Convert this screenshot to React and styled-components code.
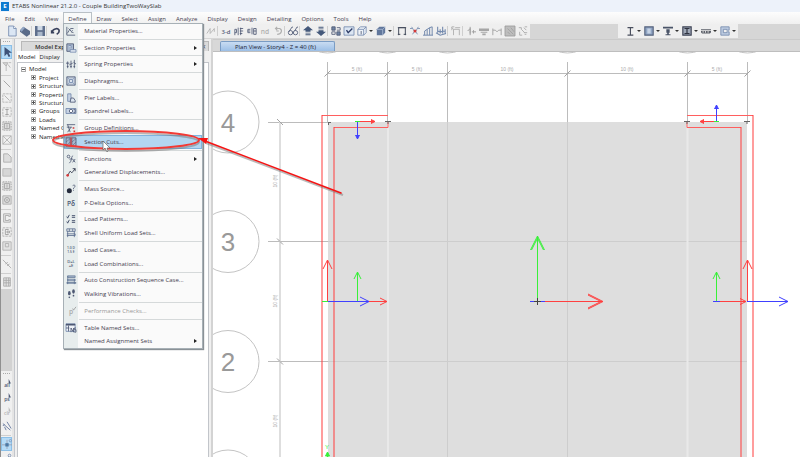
import React from 'react';
import styled, { createGlobalStyle } from 'styled-components';

const GlobalStyle = createGlobalStyle`
    * {
        box-sizing: border-box;
    }
    body {
        margin: 0;
        overflow: hidden;
        font-family: "Open Sans", "Noto Sans", sans-serif;
        font-size: 6px;
        line-height: 8px;
        color: #45404f;
    }
    button {
        margin: 0;
        padding: 0;
        border: 0;
        background: none;
        font: inherit;
        color: inherit;
    }
    ul {
        margin: 0;
        padding: 0;
        list-style: none;
    }
`;

const N = '#4d5873';
const G = '#b0b0b0';
const B = '#7389ad';
const R = '#d33a3a';

// every icon is drawn on a 12 x 12 grid
const icons = {
    /* main toolbar */
    newFile: <><path d="M2 0h6l3 3v9H2z" fill="#dbe6f4" stroke={B} /><path d="M8 0v3h3" fill="#fff" stroke={B} /></>,
    slab: <><path d="M0 5l4-4 8 5v4l-4 3-8-6z" fill="#5b6c8a" /><path d="M0 5l4-4 2 1-4 5z" fill="#94a7c6" /></>,
    save: <><path d="M0 0h12v12H0z" fill="#5f6f8d" /><path d="M3 0h6v5H3z" fill="#cfd9e6" /><path d="M3 7h6v5H3z" fill="#aab8cb" /></>,
    undo: <path d="M2 9V5M1 8h4M2 8c2-6 9-6 9-2 0 2-1 3-3 4" fill="none" stroke="#39415c" strokeWidth="2" />,
    wave: <path d="M1 9l4-6v6l5-6M10 3v4" fill="none" stroke={G} />,
    elev: <path d="M1 4v7M1 4h2v4H1M5 2v9M8 2v9M7 3h4M7 6h4M7 9h3" fill="none" stroke={N} />,
    elevB: <path d="M4 4H1v4h3M1 6h3M6 2v8M8 3h3v7H8zM8 6h3" fill="none" stroke={N} />,
    rotate: <path d="M3 3h5c4 2 2 7-3 7M5 1L3 3l2 2M7 6H4" fill="none" stroke={G} strokeWidth="1.4" />,
    glasses: <><circle cx="3" cy="8" r="2.6" fill="none" stroke={N} /><circle cx="9" cy="8" r="2.6" fill="none" stroke={N} /><path d="M1 7l4-6 1 1M8 6l3-5 1 1M5 8h2" fill="none" stroke={N} /></>,
    up: <path d="M6 0l6 5H9v2H3V5H0zM3 8h6v1H3zM3 10h6v1H3z" fill="#44587a" />,
    down: <path d="M6 12L0 7h3V5h6v2h3zM3 3h6v1H3zM3 1h6v1H3z" fill="#44587a" />,
    shapes: <><path d="M1 1h4v4H1zM7 7h4v4H7z" fill="#6f83a4" stroke={N} /><path d="M7 2h4v3H7M1 7h4v3H1z" fill="none" stroke={N} /></>,
    check: <><path d="M0 1h12v10H0z" fill="#dce6f3" stroke={B} /><path d="M3 5l2 3 5-5" fill="none" stroke="#2e3c66" strokeWidth="1.6" /></>,
    cube: <><path d="M1 4l3-3h7v7l-3 3H1zM1 4h7v7M8 4l3-3" fill="#edf2f8" stroke={B} /><path d="M5 6v4" stroke={N} /></>,
    cubeFull: <><path d="M1 4l3-3h7v7l-3 3H1z" fill="#61779c" /><path d="M1 4h7v7M8 4l3-3" fill="none" stroke="#a9bad4" /></>,
    frame: <path d="M2 11V2h8v9M1 10h3M8 10h3M1 2h10" fill="none" stroke="#454c5d" strokeWidth="1.2" />,
    deform: <><path d="M2 1l3 5M10 1L7 6M3 10l2-3M9 10L7 7M0 3h3M9 3h3" stroke={B} fill="none" /><circle cx="6" cy="6" r="1.8" fill={R} /></>,
    bars: <path d="M0 11h12M2 11V6M5 11V4M8 11V2M11 11V1M2 6l3-2 3-2 3-1" fill="none" stroke={B} strokeWidth="1.2" />,
    barsB: <path d="M0 8l5 3 7-2M2 8V1M5 9V4M8 9V1M11 9V4M2 6l3 1 6-1" fill="none" stroke={B} strokeWidth="1.3" />,
    frameG: <path d="M3 11V4h7v7M1 2l2 2M1 5V1h3M5 2h6" fill="none" stroke="#a9a9a9" />,
    nodeG: <path d="M5 1v10M2 6l3-3v6M7 7h5M9 5v4" fill="none" stroke="#a2a2a2" strokeWidth="1.2" />,
    stackG: <path d="M0 3h12v3H0zM2 7h8v1H2zM4 9h4v2H4z" fill="#a6a6a6" />,
    portalG: <path d="M1 11V3M11 11V3M1 5h3l2 2 2-2h3" fill="none" stroke="#a8a8a8" strokeWidth="1.2" />,
    hatchG: <><path d="M0 0h12v12H0z" fill="#bdbdbd" stroke="#9a9a9a" /><path d="M3 3l7 7M3 7l3 3M7 2l4 5" stroke="#a0a0a0" /></>,
    dotsG: <path d="M1 2h3v2M7 2l3 3M8 1h3M2 7v4h3M7 8h4M8 10h2M4 4l4 4" fill="none" stroke="#a6a6a6" />,
    ibeam: <path d="M3 2h7M3 11h7M6.5 2v9" stroke="#4a4f5e" strokeWidth="1.4" />,
    rect: <><path d="M1 1h10v10H1z" fill="#8fa4c3" stroke="#56637e" strokeWidth="1.4" /><path d="M4 3h4v6H4z" fill="#c5d2e4" /></>,
    tee: <path d="M0 1h12v2H0zM4 4h4v4H4zM3 10h6v1H3zM5 7h2v4H5z" fill="#4a5468" />,
    encased: <><path d="M1 1h10v10H1z" fill="#9fa8b7" stroke="#3e4456" strokeWidth="1.4" /><path d="M3 3h6M3 9h6M6 3v6" stroke="#2f3340" strokeWidth="1.4" /></>,
    deck: <path d="M0 4h12v1H0zM0 6h2v2H0zM3 6h2v2H3zM6 6h2v2H6zM9 6h3v2H9zM1 8h10v1H1z" fill="#5c6069" />,
    wall: <path d="M11 1v4H8V4H4v4h4V7h3v4H1V1z" fill="#bccbe0" stroke={B} />,
    /* side toolbar */
    pointer: <path d="M3 0v11l3-3 2 4 2-1-2-4h4z" fill="#3d5279" />,
    pointerG: <path d="M1 2h6l-2 4zM5 5v7M7 4l3 4M8 2h3" fill="#d5d5d5" stroke={G} />,
    line: <path d="M2 2l8 8" stroke="#a7a7a7" strokeWidth="1.2" />,
    lineBox: <><path d="M1 1h10v10H1z" fill="none" stroke={G} strokeDasharray="3 1" /><path d="M3 3l6 6" stroke="#a7a7a7" /></>,
    colBox: <><path d="M1 1h10v10H1z" fill="none" stroke={G} strokeDasharray="3 1" /><path d="M4 3h4M4 9h4M6 3v6" stroke="#999" /></>,
    gridBox: <><path d="M1 1h10v10H1z" fill="#dedede" stroke="#9c9c9c" strokeDasharray="2 1" /><path d="M3 3h6v6H3zM6 4v4" fill="none" stroke="#a4a4a4" /></>,
    cross: <path d="M1 1h10v10H1zM1 1l10 10M11 1L1 11" fill="none" stroke={G} />,
    poly: <path d="M2 1h5l4 4v6H2z" fill="#ddd" stroke="#aaa" />,
    box: <path d="M1 2h10v9H1z" fill="#d6d6d6" stroke="#b3b3b3" />,
    ring: <><path d="M1 1h10v10H1z" fill="#ddd" stroke="#aaa" /><circle cx="6" cy="6" r="3" fill="none" stroke="#999" /><circle cx="6" cy="6" r="1" fill="#999" /></>,
    cshape: <path d="M10 1v3H8V3H4v6h4V8h2v3H2V1z" fill="#ececec" stroke="#a3a3a3" />,
    cbox: <><path d="M1 1h10v10H1z" fill="none" stroke="#aaa" strokeDasharray="3 1" /><path d="M8 3H4v6h4M6 5h3v2H6z" fill="none" stroke="#999" /></>,
    door: <path d="M1 1h10v10H1zM4 3h4v4H4z" fill="#e3e3e3" stroke="#adadad" />,
    link: <path d="M1 1l10 10M4 6l3-2M6 8l3-2" stroke="#a7a7a7" />,
    tableG: <path d="M2 1h8v10H2zM2 4h8M2 7h8M5 1v10M8 1v10" fill="#e2e2e2" stroke="#a8a8a8" />,
    wand: <path d="M1 3l9 8M3 7l2 4M6 1l5 8M1 6l2-2" stroke="#5b7098" fill="none" />,
    snap: <><path d="M0 7h12M6 1v11" stroke="#9a9fb0" /><path d="M4 5h4v4H4z" fill="#4b79a5" /><circle cx="10" cy="2" r="1.4" fill="none" stroke="#8199bb" /></>,
    snapEnd: <><path d="M1 11l7-7" stroke={B} /><circle cx="9" cy="3" r="1.6" fill="none" stroke={B} /></>,
    /* define menu */
    material: <path d="M1 1v10h10M1 9c2-1 3-6 5-6h3M3 3l3 3M8 5l-2 2 3 1" fill="none" stroke={N} />,
    section: <><path d="M1 1h8v9H1z" fill="#a9b9cf" stroke={N} /><path d="M3 3h3v3M5 8h7v3H5z" fill="#e0e8f2" stroke={B} /></>,
    spring: <path d="M2 3v8M6 2v9M10 1v10M0 5h4M4 7l4-2M9 4l3 2M1 9h2M5 9h2M9 9h2" fill="none" stroke={N} />,
    diaphragm: <><path d="M1 1h10v10H1z" fill="#c4cfde" stroke={N} /><path d="M1 1l10 10M11 1L1 11" stroke={B} strokeWidth=".7" /><circle cx="6" cy="6" r="2" fill="#dde5ee" stroke={B} /></>,
    pier: <><path d="M2 1h4v9H2z" fill="#c6d2e3" stroke={B} /><path d="M5 11l1-5h3l2 3v2z" fill="#dce5ef" stroke={N} /></>,
    spandrel: <><path d="M0 3h12v6H0z" fill="#c6d2e3" stroke={B} /><circle cx="6" cy="6" r="2" fill="#fff" stroke={N} /><path d="M9 4h2v4H9" fill="none" stroke={N} /></>,
    group: <><path d="M1 2h10M1 5h6M2 2l3 9M6 5L2 11" fill="none" stroke={N} /><path d="M8 5h2v2H8zM9 9h2v2H9z" fill={R} /></>,
    cuts: <><path d="M0 1h5v10H0zM7 1h5v10H7z" fill="#a9b9d0" stroke={N} /><path d="M0 6l5-4M0 11l5-5M7 6l5-4M7 11l5-5" stroke={N} strokeWidth=".6" /><path d="M6 0v12" stroke={R} strokeWidth="1.4" /></>,
    functions: <><circle cx="3" cy="3" r="1.6" fill="none" stroke={N} /><path d="M8 2C6 4 7 9 4 11M4 6h4M8 6l3 4M11 6l-3 4" fill="none" stroke={N} /></>,
    displacement: <><path d="M2 10l3-5 2 2 4-5M8 2h3v3" fill="none" stroke="#30364a" /><circle cx="2" cy="10" r="1.6" fill={R} /></>,
    mass: <><circle cx="4" cy="8" r="3" fill="#252c3d" /><path d="M8 2c3-2 4 1 1 3v1M9 7v1" fill="none" stroke={N} /></>,
    patterns: <path d="M1 3l1 2 2-4M7 2h4M7 4h4M1 9l1 2 2-4M7 8h4M7 10h4" fill="none" stroke={N} strokeWidth="1.2" />,
    shell: <path d="M1 1h10v3H1zM4 1v3M8 1v3M2 4v7M10 4v7M1 7h10v2H1" fill="none" stroke="#5b6f90" />,
    auto: <path d="M2 1h9v2H2zM2 5h9v2H2zM1 9h11v1H1zM2 1v10M10 5v6" fill="#a5b5cc" stroke="#5b6f90" strokeWidth=".8" />,
    walking: <><ellipse cx="4" cy="5" rx="1.6" ry="2.6" fill={N} /><ellipse cx="4" cy="10" rx="1" ry="1" fill={N} /><ellipse cx="9" cy="3" rx="1.6" ry="2.6" fill={N} /><ellipse cx="9" cy="8" rx="1" ry="1" fill={N} /></>,
    table: <><path d="M0 1h11v9H0z" fill="#eef2f7" stroke={B} /><path d="M0 1h11v2H0z" fill={N} /><path d="M3 3v7M0 6h4M6 11V6l3 5V6M12 6h-2v2h2v3h-2" fill="none" stroke={N} /></>,
};

// small icons that are lettering rather than drawing
const Letters = ({ lines, color = N, size = 5 }) => lines.map((t, i) => (
    <text key={t} x="6" y={lines.length === 1 ? 9 : 5 + i * 5} fontSize={size} fontWeight="600"
        textAnchor="middle" fill={color} fontFamily="Open Sans, sans-serif">{t}</text>
));

const letterIcons = {
    view3d: <Letters lines={['3-d']} size={7} />,
    nd: <Letters lines={['nd']} size={8} color={G} />,
    pdelta: <Letters lines={['Pδ']} size={8} />,
    cases: <Letters lines={['1.0 D', '1.5 E']} size={4} />,
    combos: <Letters lines={['D+L', '+E']} size={5} />,
    perf: <><Letters lines={['p']} size={8} color="#aaa" /><path d="M8 3l1 2 3-4" fill="none" stroke="#999" /></>,
    all: <><Letters lines={['', 'all']} size={6} /><path d="M8 0v6l2-1 1 1z" fill={N} /></>,
    ps: <><Letters lines={['', 'ps']} size={6} /><path d="M8 0v6l2-1 1 1z" fill={N} /></>,
    clr: <><Letters lines={['', 'clr']} size={6} color={G} /><path d="M8 0v6l2-1 1 1z" fill="#bbb" /></>,
};

const Icon = ({ name }) => (
    <IconSvg viewBox="0 0 12 12" aria-hidden="true">{icons[name] || letterIcons[name]}</IconSvg>
);

const mainTools = ['newFile', 'slab', '|', 'save', '|', 'undo'];
const viewTools = [
    'wave', '|', 'view3d', 'elev', 'elevB', 'nd', 'rotate', '|', 'glasses', '|', 'up', 'down', '|',
    'shapes', 'check', 'cube', 'v', 'cubeFull', 'v', '|', 'frame', 'deform', 'bars', 'barsB', '|',
    'frameG', '|', 'nodeG', 'stackG', 'portalG', 'hatchG', 'dotsG',
];
const sectionTools = ['ibeam', 'v', 'rect', 'v', 'tee', 'v', 'encased', 'v', 'deck', 'v', 'wall', 'v'];
const drawTools = [
    'pointer', 'pointerG', '|', 'line', 'lineBox', 'colBox', 'gridBox', 'cross', '|', 'poly', 'box', 'gridBox',
    'ring', '|', 'cshape', 'cbox', 'door', '|', 'link', '|', 'tableG',
];
const selectTools = ['all', 'ps', 'clr', 'wand', '|', 'snap', 'snapEnd'];

const menus = ['File', 'Edit', 'View', 'Define', 'Draw', 'Select', 'Assign', 'Analyze', 'Display', 'Design', 'Detailing', 'Options', 'Tools', 'Help'];

const defineItems = [
    { text: 'Material Properties...', icon: 'material' },
    null,
    { text: 'Section Properties', icon: 'section', sub: true },
    null,
    { text: 'Spring Properties', icon: 'spring', sub: true },
    null,
    { text: 'Diaphragms...', icon: 'diaphragm' },
    null,
    { text: 'Pier Labels...', icon: 'pier' },
    { text: 'Spandrel Labels...', icon: 'spandrel' },
    null,
    { text: 'Group Definitions...', icon: 'group' },
    { text: 'Section Cuts...', icon: 'cuts', active: true },
    null,
    { text: 'Functions', icon: 'functions', sub: true },
    { text: 'Generalized Displacements...', icon: 'displacement' },
    null,
    { text: 'Mass Source...', icon: 'mass' },
    { text: 'P-Delta Options...', icon: 'pdelta' },
    null,
    { text: 'Load Patterns...', icon: 'patterns' },
    { text: 'Shell Uniform Load Sets...', icon: 'shell' },
    null,
    { text: 'Load Cases...', icon: 'cases' },
    { text: 'Load Combinations...', icon: 'combos' },
    null,
    { text: 'Auto Construction Sequence Case...', icon: 'auto' },
    { text: 'Walking Vibrations...', icon: 'walking' },
    null,
    { text: 'Performance Checks...', icon: 'perf', disabled: true },
    null,
    { text: 'Table Named Sets...', icon: 'table' },
    { text: 'Named Assignment Sets', icon: '', sub: true },
];

const treeItems = ['Project', 'Structure', 'Properties', 'Structural', 'Groups', 'Loads', 'Named Output', 'Named Plots'];

const Tools = ({ items, vertical, selected }) => items.map((name, i) => {
    if (name === '|') return <Divider key={i} $vertical={vertical} />;
    if (name === 'v') return <Caret key={i} aria-label="More" />;
    return <ToolButton key={i} aria-label={name} $vertical={vertical} $on={name === selected}><Icon name={name} /></ToolButton>;
});

const DefineMenu = () => (
    <Menu>
        {defineItems.map((item, i) => item === null ? <MenuLine key={i} /> : (
            <MenuRow key={i}>
                <MenuButton $active={item.active} disabled={item.disabled}>
                    <span className='icon'><Icon name={item.icon} /></span>
                    <span className='text'>{item.text}</span>
                    {item.sub && <span className='arrow' />}
                </MenuButton>
            </MenuRow>
        ))}
    </Menu>
);

const Explorer = () => (
    <ExplorerBox>
        <ExplorerHead>
            <h2>Model Explorer</h2>
            <button aria-label="Close">✕</button>
        </ExplorerHead>
        <ExplorerTabs>
            <ExplorerTab $on>Model</ExplorerTab>
            <ExplorerTab>Display</ExplorerTab>
        </ExplorerTabs>
        <TreeBox>
            <Tree>
                <TreeRow><Toggle aria-label="Collapse Model" /><span>Model</span></TreeRow>
                {treeItems.map(t => (
                    <TreeRow key={t} $child><Toggle $plus aria-label={`Expand ${t}`} /><span>{t}</span></TreeRow>
                ))}
            </Tree>
        </TreeBox>
    </ExplorerBox>
);

const Arrow = ({ x, y, to, dir, color, head = 5, solid }) => {
    // dir is the angle of the shaft in degrees, `to` is its length
    return (
        <g transform={`translate(${x} ${y}) rotate(${dir})`} stroke={color} fill={solid ? color : 'none'}>
            <path d={`M0 0H${to}`} />
            <path d={`M${to - head} ${-head / 2}L${to} 0L${to - head} ${head / 2}`} />
        </g>
    );
};

const RED = '#ff4040';
const GREEN = '#38f038';
const BLUE = '#4040ff';

const Plan = () => (
    <PlanSvg role="img" aria-label="Plan View">
        <g transform="translate(-213 -52)" fill="none">
            {/* slab */}
            <rect x="328" y="122" width="419" height="400" fill="#dedede" />
            {/* grid */}
            <g stroke="#cdcdcd">
                <path d="M447.5 122V520M567.5 122V520M328 241.5H747M328 361.5H747" />
            </g>
            <path d="M388 122V520M687.5 122V520" stroke="#e9e9e9" strokeWidth="2" />
            <g stroke="#bcbcbc">
                <path d="M327.5 62V122M387.5 62V122M447.5 62V122M567.5 62V122M687.5 62V122M747.5 62V122" />
                <path d="M327 73.5H748" />
                <path d="M268 122.5H328M268 241.5H328M268 361.5H328" />
            </g>
            <path d="M280 122V520" stroke="#dedede" strokeWidth="2" />
            <g stroke="#a2a2a2">
                {[327.5, 387.5, 447.5, 567.5, 687.5, 747.5].map(x => <path key={x} d={`M${x - 3} 76.5l6-6`} />)}
                {[122, 241.5, 361.5].map(y => <path key={y} d={`M277 ${y - 3}l6 6`} />)}
            </g>
            {/* grid bubbles */}
            <g stroke="#c4c4c4">
                {[122, 241.5, 361.5, 481].map(y => <circle key={y} cx="228" cy={y} r="31" />)}
                {[327.5, 387.5, 447.5, 567.5, 687.5, 747.5].map(x => <circle key={x} cx={x} cy="22" r="31" />)}
            </g>
            <g fill="#999" fontSize="26" textAnchor="middle">
                <text x="228" y="132">4</text>
                <text x="228" y="251">3</text>
                <text x="228" y="371">2</text>
            </g>
            <g fill="#aaa" fontSize="5" textAnchor="middle">
                <text x="357" y="71">5 (ft)</text>
                <text x="417" y="71">5 (ft)</text>
                <text x="507" y="71">10 (ft)</text>
                <text x="627" y="71">10 (ft)</text>
                <text x="717" y="71">5 (ft)</text>
                {[181, 301, 421].map(y => (
                    <text key={y} transform={`translate(277 ${y}) rotate(-90)`}>10 (ft)</text>
                ))}
            </g>
            {/* walls */}
            <g stroke="#ff5f5f">
                <path d="M388 115.5H322M388 122V127.5H334M687 115.5H753M687 122V127.5H741" />
            </g>
            <g stroke="#ff3c3c" strokeWidth="2" opacity=".5">
                <path d="M322 115V520M334 127V520M741 127V520M753 115V520" />
            </g>
            <path d="M328 122.5h3M328.5 122v3M385 121.5h6M388 121v3M684 121.5h6M687 121v3M744 121.5h6M747 121v3" stroke="#666" />
            {/* local axes */}
            <Arrow x={358} y={121.5} to={17} dir={0} color={RED} head={4} solid />
            <Arrow x={357.5} y={122} to={17} dir={90} color={BLUE} head={4} solid />
            <Arrow x={717} y={121.5} to={17} dir={180} color={RED} head={4} solid />
            <Arrow x={716.5} y={121} to={16} dir={270} color={BLUE} head={4} solid />
            <path d="M355 121.5h5M714 121.5h5M322 301.5h6" stroke={GREEN} />
            <Arrow x={328} y={301.5} to={59} dir={0} color={RED} head={7} />
            <Arrow x={328} y={301.5} to={41} dir={0} color={BLUE} head={9} />
            <Arrow x={327.5} y={301} to={41} dir={270} color={RED} head={9} />
            <Arrow x={357.5} y={301} to={29} dir={270} color={GREEN} head={7} />
            <Arrow x={537.5} y={301} to={65} dir={270} color={GREEN} head={14} />
            <Arrow x={537.5} y={301} to={63} dir={270} color={GREEN} head={12} />
            <Arrow x={545} y={301.5} to={58} dir={0} color={RED} head={15} />
            <Arrow x={545} y={301.5} to={56} dir={0} color={RED} head={13} />
            <path d="M530 301.5h15" stroke={BLUE} />
            <path d="M534 301.5h7M537.5 298v7" stroke="#444" />
            <Arrow x={717} y={301.5} to={29} dir={0} color={RED} head={6} />
            <Arrow x={716.5} y={301} to={29} dir={270} color={GREEN} head={7} />
            <Arrow x={747.5} y={301} to={41} dir={270} color={RED} head={9} />
            <Arrow x={747} y={301.5} to={41} dir={0} color={BLUE} head={9} />
            <path d="M713 301.5h7" stroke={BLUE} />
            {/* global Y axis */}
            <text x="327" y="449" fontSize="6" textAnchor="middle" fill={GREEN}>Y</text>
            <path d="M327.5 452l-2 4h4zM327.5 455v9" fill={GREEN} stroke={GREEN} />
        </g>
    </PlanSvg>
);

const App = () => {
    return (
        <Page>
            <GlobalStyle />
            <TitleBar><b>E</b><h1>ETABS Nonlinear 21.2.0 - Couple BuildingTwoWaySlab</h1></TitleBar>
            <MenuBar>
                {menus.map(m => (
                    <MenuCell key={m}>
                        <MenuTitle $open={m === 'Define'}>{m}</MenuTitle>
                        {m === 'Define' && <DefineMenu />}
                    </MenuCell>
                ))}
            </MenuBar>
            <ToolStrip>
                <ToolGroup><Tools items={mainTools} /><Filler /><Tools items={viewTools} /></ToolGroup>
                <ToolGroup $right><Tools items={sectionTools} /></ToolGroup>
            </ToolStrip>
            <Body>
                <SideBar>
                    <SideGroup><Grip /><Tools items={drawTools} vertical selected="pointer" /></SideGroup>
                    <SideGroup $bottom><Grip /><Tools items={selectTools} vertical selected="snap" /></SideGroup>
                </SideBar>
                <Explorer />
                <View>
                    <ViewTabs><ViewTab>Plan View - Story4 - Z = 40 (ft)</ViewTab></ViewTabs>
                    <Plan />
                </View>
            </Body>
            <Markup aria-hidden="true">
                <g fill="none" stroke="#777" opacity=".5" strokeWidth="2">
                    <ellipse cx="126" cy="142" rx="73" ry="9" />
                    <path d="M206 143L343 195" />
                </g>
                <ellipse cx="126" cy="140" rx="73" ry="9" fill="none" stroke="#f23a35" strokeWidth="2" />
                <path d="M205 141L341 193" stroke="#f51414" strokeWidth="1.6" strokeLinecap="round" />
                <path d="M198 138l10 0-2 6z" fill="#f51414" />
                <path d="M103 141v9l2-2 2 4 1-1-1-3h3z" fill="#fff" stroke="#666" strokeWidth=".7" />
            </Markup>
        </Page>
    );
};

const Page = styled.div`
    position: relative;
    display: flex;
    flex-direction: column;
    height: 100vh;
    background: #fff;
`;

const IconSvg = styled.svg`
    display: block;
    width: 10px;
    height: 10px;
    overflow: visible;
`;

const TitleBar = styled.header`
    display: flex;
    align-items: center;
    gap: 3px;
    height: 12px;
    padding-left: 1px;
    background: #edf2fa;
    b {
        width: 8px;
        height: 9px;
        background: #0e7ad0;
        color: #fff;
        text-align: center;
    }
    h1 {
        margin: 0;
        font-size: 6px;
        font-weight: 400;
        color: #333;
    }
`;

const MenuBar = styled.nav`
    display: flex;
    height: 12px;
    background: linear-gradient(#fdfdfd, #f0f0f0);
`;

const MenuCell = styled.div`
    position: relative;
`;

const MenuTitle = styled.button`
    height: 12px;
    padding: 0 4px;
    border: 1px solid ${props => props.$open ? '#b9c0c6' : 'transparent'};
    border-bottom: 0;
    background: ${props => props.$open ? '#f9fafa' : 'none'};
`;

const Menu = styled.ul`
    position: absolute;
    z-index: 2;
    top: 11px;
    left: 0;
    display: flex;
    flex-direction: column;
    width: 140px;
    min-height: 326px;
    border: 1px solid #a7b0b6;
    background: linear-gradient(90deg, #e7eded 14px, #fafafa 14px);
    box-shadow: 1px 1px 1px #8a9196;
`;

const MenuRow = styled.li`
    flex: 1;
    display: flex;
`;

const MenuLine = styled.li`
    height: 1px;
    margin: 1px 0 1px 15px;
    background: #d5d9da;
`;

const MenuButton = styled.button`
    flex: 1;
    display: flex;
    align-items: center;
    padding-right: 5px;
    text-align: left;
    background: ${props => props.$active ? '#b3d6f1' : 'none'};
    box-shadow: ${props => props.$active ? 'inset 0 0 0 1px #7fb5e0' : 'none'};
    &:disabled {
        color: #999;
    }
    .icon {
        width: 20px;
        padding-left: 2px;
    }
    .text {
        flex: 1;
    }
    .arrow {
        border: 2px solid transparent;
        border-left: 3px solid #222;
        border-right: 0;
    }
`;

const ToolStrip = styled.div`
    display: flex;
    height: 15px;
    background: #d6d6d6;
`;

const ToolGroup = styled.div`
    display: flex;
    align-items: center;
    height: 14px;
    padding-left: 5px;
    padding-right: 1px;
    margin-left: ${props => props.$right ? '88px' : '0'};
    background: #efefef;
`;

// room taken by the tools that the open menu covers
const Filler = styled.div`
    width: 143px;
`;

const ToolButton = styled.button`
    flex: none;
    display: flex;
    align-items: center;
    justify-content: center;
    width: ${props => props.$vertical ? '11px' : '13px'};
    height: ${props => props.$vertical ? '14px' : '13px'};
    background: ${props => props.$on ? '#b5dbf7' : 'none'};
    box-shadow: ${props => props.$on ? 'inset 0 0 0 1px #8cc0e8' : 'none'};
`;

const Divider = styled.span`
    flex: none;
    width: ${props => props.$vertical ? '10px' : '1px'};
    height: ${props => props.$vertical ? '1px' : '10px'};
    margin: ${props => props.$vertical ? '2px 0 1px' : '0 1px 0 0'};
    background: #cfcfcf;
`;

const Caret = styled.button`
    width: 4px;
    margin: 0 1px;
    border: 2px solid transparent;
    border-top-color: #333;
    border-bottom: 0;
`;

const Body = styled.main`
    flex: 1;
    display: flex;
    min-height: 0;
`;

const SideBar = styled.aside`
    flex: none;
    display: flex;
    flex-direction: column;
    justify-content: space-between;
    width: 14px;
    overflow: hidden;
    background: #d2d2d2;
    border-left: 1px solid #8f8f8f;
    border-right: 2px solid #e4e4e4;
`;

const SideGroup = styled.div`
    display: flex;
    flex-direction: column;
    background: #f0f0f0;
    margin-bottom: ${props => props.$bottom ? '-8px' : '0'};
`;

const Grip = styled.span`
    height: 2px;
    margin: 2px;
    border-top: 1px dotted #aaa;
`;

const ExplorerBox = styled.section`
    flex: none;
    display: flex;
    flex-direction: column;
    width: 199px;
    padding: 2px 2px 0 2px;
    background: #f0f0f0;
    border-left: 1px solid #c3c6cc;
    border-right: 2px solid #d3d3d3;
`;

const ExplorerHead = styled.div`
    display: flex;
    align-items: center;
    height: 10px;
    margin-left: 4px;
    padding: 0 2px 0 13px;
    border: 1px solid #b8b8b8;
    border-bottom: 0;
    background: #dadada;
    h2 {
        flex: 1;
        margin: 0;
        font-size: 6px;
        font-weight: 600;
        color: #333;
    }
    button {
        width: 5px;
    }
`;

const ExplorerTabs = styled.div`
    display: flex;
    height: 11px;
`;

const ExplorerTab = styled.button`
    padding: 0 3px 0 1px;
    color: #222;
    background: ${props => props.$on ? '#fff' : '#f0f0f0'};
`;

const TreeBox = styled.div`
    flex: 1;
    padding: 2px 0 0 3px;
    border: 1px solid #c2c5ca;
    border-bottom: 0;
    background: #fff;
    color: #222;
`;

const Tree = styled.ul`
    display: flex;
    flex-direction: column;
    min-height: 76px;
`;

const TreeRow = styled.li`
    flex: 1;
    display: flex;
    align-items: center;
    gap: 3px;
    padding-left: ${props => props.$child ? '10px' : '0'};
`;

const Toggle = styled.button`
    width: 5px;
    height: 5px;
    border: 1px solid #aaa;
    background:
        linear-gradient(#555, #555) center / 3px 1px no-repeat,
        linear-gradient(#555, #555) center / 1px ${props => props.$plus ? '3px' : '1px'} no-repeat,
        #fff;
`;

const View = styled.section`
    flex: 1;
    display: flex;
    flex-direction: column;
    min-width: 0;
`;

const ViewTabs = styled.div`
    display: flex;
    align-items: flex-end;
    height: 13px;
    padding-left: 7px;
    background: #d8d8d8;
    border-top: 1px solid #cacaca;
    border-bottom: 1px solid #bebebe;
`;

const ViewTab = styled.button`
    height: 10px;
    padding: 0 18px 0 14px;
    border: 1px solid #7a9cc4;
    border-bottom: 0;
    border-radius: 2px 2px 0 0;
    background: linear-gradient(#c9dcf2, #9cbfe6);
    color: #223;
`;

const PlanSvg = styled.svg`
    flex: 1;
    display: block;
    width: 100%;
    min-height: 0;
    background: #fff;
    font-family: "Liberation Sans", Arial, sans-serif;
`;

const Markup = styled.svg`
    position: absolute;
    z-index: 3;
    top: 0;
    left: 0;
    width: 100%;
    height: 100%;
    pointer-events: none;
`;

export default App;
